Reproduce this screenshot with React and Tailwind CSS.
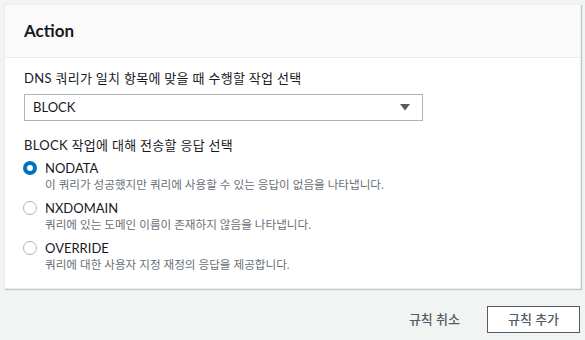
const options = [
  { value: 'NODATA', desc: '이 쿼리가 성공했지만 쿼리에 사용할 수 있는 응답이 없음을 나타냅니다.' },
  { value: 'NXDOMAIN', desc: '쿼리에 있는 도메인 이름이 존재하지 않음을 나타냅니다.' },
  { value: 'OVERRIDE', desc: '쿼리에 대한 사용자 지정 재정의 응답을 제공합니다.' },
]

const App = () => {
  const selected = 'NODATA'

  return (
    <div
      className="w-[585px] h-[340px] bg-[#f2f3f3] pt-1 pl-1 text-[#16191f]"
      style={{ fontFamily: 'Lato, "Noto Sans CJK KR", sans-serif' }}
    >
      {/* Action panel */}
      <div className="w-[577px] h-[285px] bg-white border border-[#eaeded] shadow-[1px_1px_1px_rgba(0,28,36,0.2)]">
        <div className="h-[53px] bg-[#fafafa] border-b border-[#eaeded] flex items-center px-[19px]">
          <h2 className="text-[17px] font-bold">Action</h2>
        </div>

        <div className="px-[19px] pt-[11px]">
          <label className="block text-[13px] leading-[18px] tracking-[0.3px]">DNS 쿼리가 일치 항목에 맞을 때 수행할 작업 선택</label>
          <div className="mt-[7px] w-[399px] h-[27px] border border-[#aab7b8] flex items-center justify-between pl-[8px] pr-[12px]">
            <span className="text-[13px]">BLOCK</span>
            <svg width="10" height="7" viewBox="0 0 10 7">
              <path d="M0 0h10L5 6.5z" fill="#545b64" />
            </svg>
          </div>

          <div className="mt-[15px] text-[13px] leading-[18px] tracking-[0.3px]">BLOCK 작업에 대해 전송할 응답 선택</div>
          <div className="mt-[6px] flex flex-col gap-[7px]">
            {options.map((opt) => (
              <div key={opt.value} className="flex items-start gap-[8px] -ml-[1px]">
                {opt.value === selected ? (
                  <span className="mt-[1px] w-[14px] h-[14px] rounded-full border-[4px] border-[#0073bb] bg-white" />
                ) : (
                  <span className="mt-[1px] w-[14px] h-[14px] rounded-full border border-[#aab7b8] bg-white" />
                )}
                <div>
                  <div className="text-[13px] leading-[17px]">{opt.value}</div>
                  <div className="text-[11.6px] leading-[16px] text-[#687078]">{opt.desc}</div>
                </div>
              </div>
            ))}
          </div>
        </div>
      </div>

      <div className="flex justify-end items-center gap-[27px] pr-[5px] mt-[17px]">
        <button className="text-[13px] font-medium text-[#545b64]">규칙 취소</button>
        <button className="w-[93px] h-[27px] border border-[#545b64] bg-white text-[13px] font-medium text-[#545b64]">
          규칙 추가
        </button>
      </div>
    </div>
  )
}

export default App
